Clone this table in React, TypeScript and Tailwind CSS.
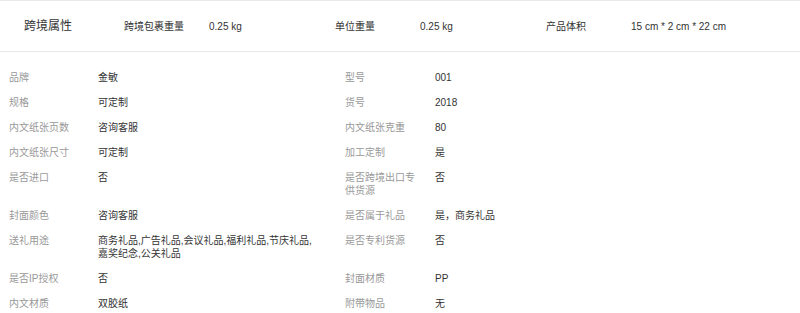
const attrs: [string, string, string, string][] = [
  ["品牌", "金敏", "型号", "001"],
  ["规格", "可定制", "货号", "2018"],
  ["内文纸张页数", "咨询客服", "内文纸张克重", "80"],
  ["内文纸张尺寸", "可定制", "加工定制", "是"],
  ["是否进口", "否", "是否跨境出口专供货源", "否"],
  ["封面颜色", "咨询客服", "是否属于礼品", "是，商务礼品"],
  ["送礼用途", "商务礼品,广告礼品,会议礼品,福利礼品,节庆礼品,嘉奖纪念,公关礼品", "是否专利货源", "否"],
  ["是否IP授权", "否", "封面材质", "PP"],
  ["内文材质", "双胶纸", "附带物品", "无"],
];

const crossBorder = [
  { label: "跨境包裹重量", value: "0.25 kg" },
  { label: "单位重量", value: "0.25 kg" },
  { label: "产品体积", value: "15 cm * 2 cm * 22 cm" },
];

export default function App() {
  return (
    <div className="w-[800px] h-[313px] overflow-hidden bg-white font-['Liberation_Sans','Noto_Sans_CJK_SC',sans-serif]">
      {/* 跨境属性 */}
      <div className="flex items-center h-[52px] border-y border-[#e8e8e8] text-[#333]">
        <div className="w-[124px] pl-[24px] text-[12px]">跨境属性</div>
        {crossBorder.map((c) => (
          <div key={c.label} className="flex items-center text-[10px]">
            <div className="w-[85px]">{c.label}</div>
            <div className="w-[126px]">{c.value}</div>
          </div>
        ))}
      </div>

      {/* 商品属性 */}
      <div className="pt-[13px] pl-[9px] text-[10px] leading-[13px]">
        {attrs.map(([l1, v1, l2, v2]) => (
          <div key={l1} className="grid grid-cols-[89px_247px_90px_1fr] py-[6px]">
            <div className="pr-[12px] text-[#999]">{l1}</div>
            <div className="pr-[32px] text-[#333]">{v1}</div>
            <div className="pr-[14px] text-[#999]">{l2}</div>
            <div className="text-[#333]">{v2}</div>
          </div>
        ))}
      </div>
    </div>
  );
}
